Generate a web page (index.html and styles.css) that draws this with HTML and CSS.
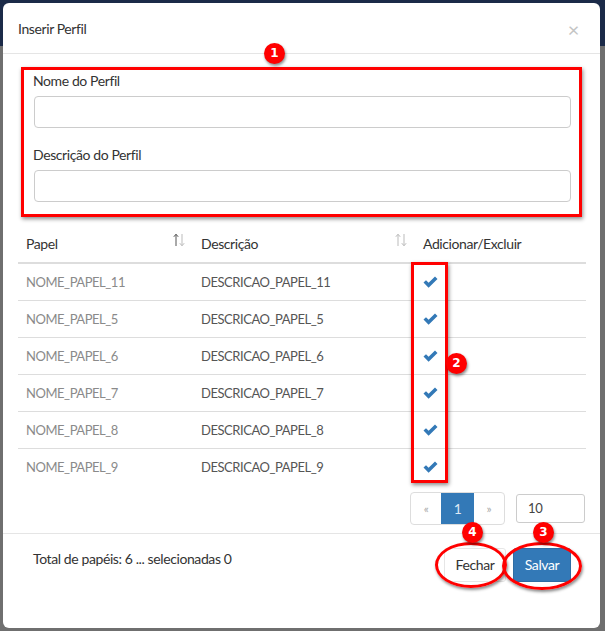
FILE: index.html
```html
<!DOCTYPE html>
<html lang="pt">
<head>
<meta charset="utf-8">
<title>Inserir Perfil</title>
<link rel="stylesheet" href="styles.css">
</head>
<body>
<div class="modal">
  <div class="modal-header">
    <h4 class="modal-title">Inserir Perfil</h4>
    <span class="close">×</span>
  </div>
  <div class="modal-body">
    <div class="hl-box">
      <div class="form-group">
        <label class="label">Nome do Perfil</label>
        <div class="input"></div>
      </div>
      <div class="form-group second">
        <label class="label">Descrição do Perfil</label>
        <div class="input"></div>
      </div>
    </div>
    <table class="grid">
      <thead>
        <tr>
          <th class="c1"><span>Papel</span><svg class="sort" width="12" height="14" viewBox="0 0 12 14"><path d="M3 13V1.5M0.8 3.8L3 1.2 5.2 3.8" stroke="#555" fill="none" stroke-width="1"/><path d="M9 1v11.5M6.8 10.2L9 12.8 11.2 10.2" stroke="#bbb" fill="none" stroke-width="1"/></svg></th>
          <th class="c2"><span>Descrição</span><svg class="sort" width="12" height="14" viewBox="0 0 12 14"><path d="M3 13V1.5M0.8 3.8L3 1.2 5.2 3.8" stroke="#bbb" fill="none" stroke-width="1"/><path d="M9 1v11.5M6.8 10.2L9 12.8 11.2 10.2" stroke="#bbb" fill="none" stroke-width="1"/></svg></th>
          <th class="c3">Adicionar/Excluir</th>
        </tr>
      </thead>
      <tbody>
        <tr><td class="nm">NOME_PAPEL_11</td><td class="ds">DESCRICAO_PAPEL_11</td><td><svg class="ok" width="15" height="12" viewBox="0 0 15 12"><path d="M0.5 6.5L3 4.2 5.6 6.8 12 0.4 14.5 2.9 5.6 11.8Z" fill="#3379b7"/></svg></td></tr>
        <tr><td class="nm">NOME_PAPEL_5</td><td class="ds">DESCRICAO_PAPEL_5</td><td><svg class="ok" width="15" height="12" viewBox="0 0 15 12"><path d="M0.5 6.5L3 4.2 5.6 6.8 12 0.4 14.5 2.9 5.6 11.8Z" fill="#3379b7"/></svg></td></tr>
        <tr><td class="nm">NOME_PAPEL_6</td><td class="ds">DESCRICAO_PAPEL_6</td><td><svg class="ok" width="15" height="12" viewBox="0 0 15 12"><path d="M0.5 6.5L3 4.2 5.6 6.8 12 0.4 14.5 2.9 5.6 11.8Z" fill="#3379b7"/></svg></td></tr>
        <tr><td class="nm">NOME_PAPEL_7</td><td class="ds">DESCRICAO_PAPEL_7</td><td><svg class="ok" width="15" height="12" viewBox="0 0 15 12"><path d="M0.5 6.5L3 4.2 5.6 6.8 12 0.4 14.5 2.9 5.6 11.8Z" fill="#3379b7"/></svg></td></tr>
        <tr><td class="nm">NOME_PAPEL_8</td><td class="ds">DESCRICAO_PAPEL_8</td><td><svg class="ok" width="15" height="12" viewBox="0 0 15 12"><path d="M0.5 6.5L3 4.2 5.6 6.8 12 0.4 14.5 2.9 5.6 11.8Z" fill="#3379b7"/></svg></td></tr>
        <tr><td class="nm">NOME_PAPEL_9</td><td class="ds">DESCRICAO_PAPEL_9</td><td><svg class="ok" width="15" height="12" viewBox="0 0 15 12"><path d="M0.5 6.5L3 4.2 5.6 6.8 12 0.4 14.5 2.9 5.6 11.8Z" fill="#3379b7"/></svg></td></tr>
      </tbody>
    </table>
    <div class="pager-row">
      <ul class="pagination">
        <li class="pg">«</li>
        <li class="pg active">1</li>
        <li class="pg">»</li>
      </ul>
      <div class="page-size">10</div>
    </div>
  </div>
  <div class="modal-footer">
    <span class="total">Total de papéis: 6 ... selecionadas 0</span>
    <div class="btns">
      <span class="btn btn-default">Fechar</span>
      <span class="btn btn-primary">Salvar</span>
    </div>
  </div>

  <div class="hl-col"></div>
  <div class="ring ring4"></div>
  <div class="ring ring3"></div>
  <span class="badge b1">1</span>
  <span class="badge b2">2</span>
  <span class="badge b4">4</span>
  <span class="badge b3">3</span>
</div>
</body>
</html>
```
FILE: styles.css
```css
* { box-sizing: border-box; }
html, body { margin: 0; padding: 0; }
body {
  width: 605px;
  height: 631px;
  overflow: hidden;
  background: linear-gradient(#1b2a48 0, #1b2a48 46px, #6f6f6f 46px);
  font-family: "Lato", "Liberation Sans", sans-serif;
  font-size: 14px;
  letter-spacing: -0.4px;
  color: #333;
}
.modal {
  position: relative;
  margin: 3px 0 0 3px;
  width: 597px;
  height: 625px;
  background: #fff;
  border-radius: 6px;
}
.modal-header {
  height: 51px;
  padding: 16px 15px 0 15px;
  border-bottom: 1px solid #e5e5e5;
  display: flex;
  justify-content: space-between;
}
.modal-title {
  margin: 0;
  font-size: 14px;
  font-weight: normal;
  line-height: 20px;
  color: #333;
}
.close {
  font-size: 20px;
  line-height: 20px;
  color: #c4c4c4;
  margin-right: 6px;
}
.modal-body {
  padding: 13px 15px 8px 15px;
}
.hl-box {
  margin: 0 3px;
  border: 3px solid #f00;
  box-shadow: 1px 2px 4px rgba(0,0,0,0.45);
  padding: 1px 8px 12px 9px;
}
.form-group .label {
  display: block;
  line-height: 20px;
  margin-bottom: 5px;
}
.form-group.second { margin-top: 17px; }
.input {
  height: 32px;
  border: 1px solid #ccc;
  border-radius: 4px;
  margin-left: 1px;
}
.grid {
  margin-top: 9px;
  width: 568px;
  border-collapse: collapse;
}
.grid th {
  text-align: left;
  font-weight: normal;
  padding: 8px;
  line-height: 20px;
  border-bottom: 2px solid #ddd;
  color: #333;
}
.grid th.c1, .grid th.c2 {
  position: relative;
}
.grid th .sort {
  position: absolute;
  right: 8px;
  top: 7px;
}
.c1 { width: 175px; }
.c2 { width: 222px; }
.grid td {
  padding: 8px;
  line-height: 20px;
  border-top: 1px solid #ddd;
  font-size: 13px;
  letter-spacing: -0.45px;
}
.grid tbody tr:first-child td { border-top: none; }
.nm { color: #8a8a8a; }
.ds { color: #555; }
.ok { vertical-align: -1px; }
.pager-row {
  margin-top: 7px;
  display: flex;
  justify-content: flex-end;
  align-items: center;
  gap: 11px;
}
.pagination {
  list-style: none;
  margin: 0;
  padding: 0;
  display: flex;
  border: 1px solid #ddd;
  border-radius: 4px;
  height: 33px;
  overflow: hidden;
}
.pg {
  width: 30px;
  line-height: 31px;
  text-align: center;
  color: #aaa;
  font-size: 12px;
}
.pg.active {
  width: 33px;
  background: #3379b7;
  color: #dde8f5;
  font-size: 14px;
}
.page-size {
  width: 69px;
  height: 29px;
  border: 1px solid #ccc;
  border-radius: 3px;
  padding-left: 11px;
  line-height: 27px;
  font-size: 13px;
  color: #444;
}
.modal-footer {
  border-top: 1px solid #e5e5e5;
  padding: 15px 29px 0 30px;
  display: flex;
  justify-content: space-between;
  align-items: flex-start;
}
.total {
  line-height: 20px;
}
.btns {
  display: flex;
  gap: 7px;
  margin-top: -1px;
}
.btn {
  height: 34px;
  line-height: 32px;
  border: 1px solid transparent;
  border-radius: 3px;
  padding: 0;
}
.btn-default {
  width: 62px;
  text-align: center;
  border-color: #e6e6e6;
  color: #333;
}
.btn-primary {
  width: 58px;
  text-align: center;
  background: #3379b7;
  border-color: #2e6da4;
  color: #fff;
}
.hl-col {
  position: absolute;
  left: 408px;
  top: 259px;
  width: 37px;
  height: 221px;
  border: 3px solid #f00;
  box-shadow: 1px 2px 4px rgba(0,0,0,0.45);
}
.ring {
  position: absolute;
  border: 3px solid #f00;
  border-radius: 50%;
  box-shadow: 1px 2px 3px rgba(0,0,0,0.45);
}
.ring4 { left: 432px; top: 539px; width: 72px; height: 46px; }
.ring3 { left: 499px; top: 539px; width: 80px; height: 48px; }
.badge {
  position: absolute;
  width: 21px;
  height: 21px;
  border-radius: 50%;
  background: #f00;
  color: #fff;
  font-family: "DejaVu Sans", sans-serif;
  font-weight: bold;
  font-size: 12px;
  letter-spacing: 0;
  line-height: 21px;
  text-align: center;
  box-shadow: 1px 2px 3px rgba(0,0,0,0.45);
}
.b1 { left: 261px; top: 40px; }
.b2 { left: 443px; top: 350px; }
.b4 { left: 459px; top: 519px; }
.b3 { left: 530px; top: 519px; }
```
